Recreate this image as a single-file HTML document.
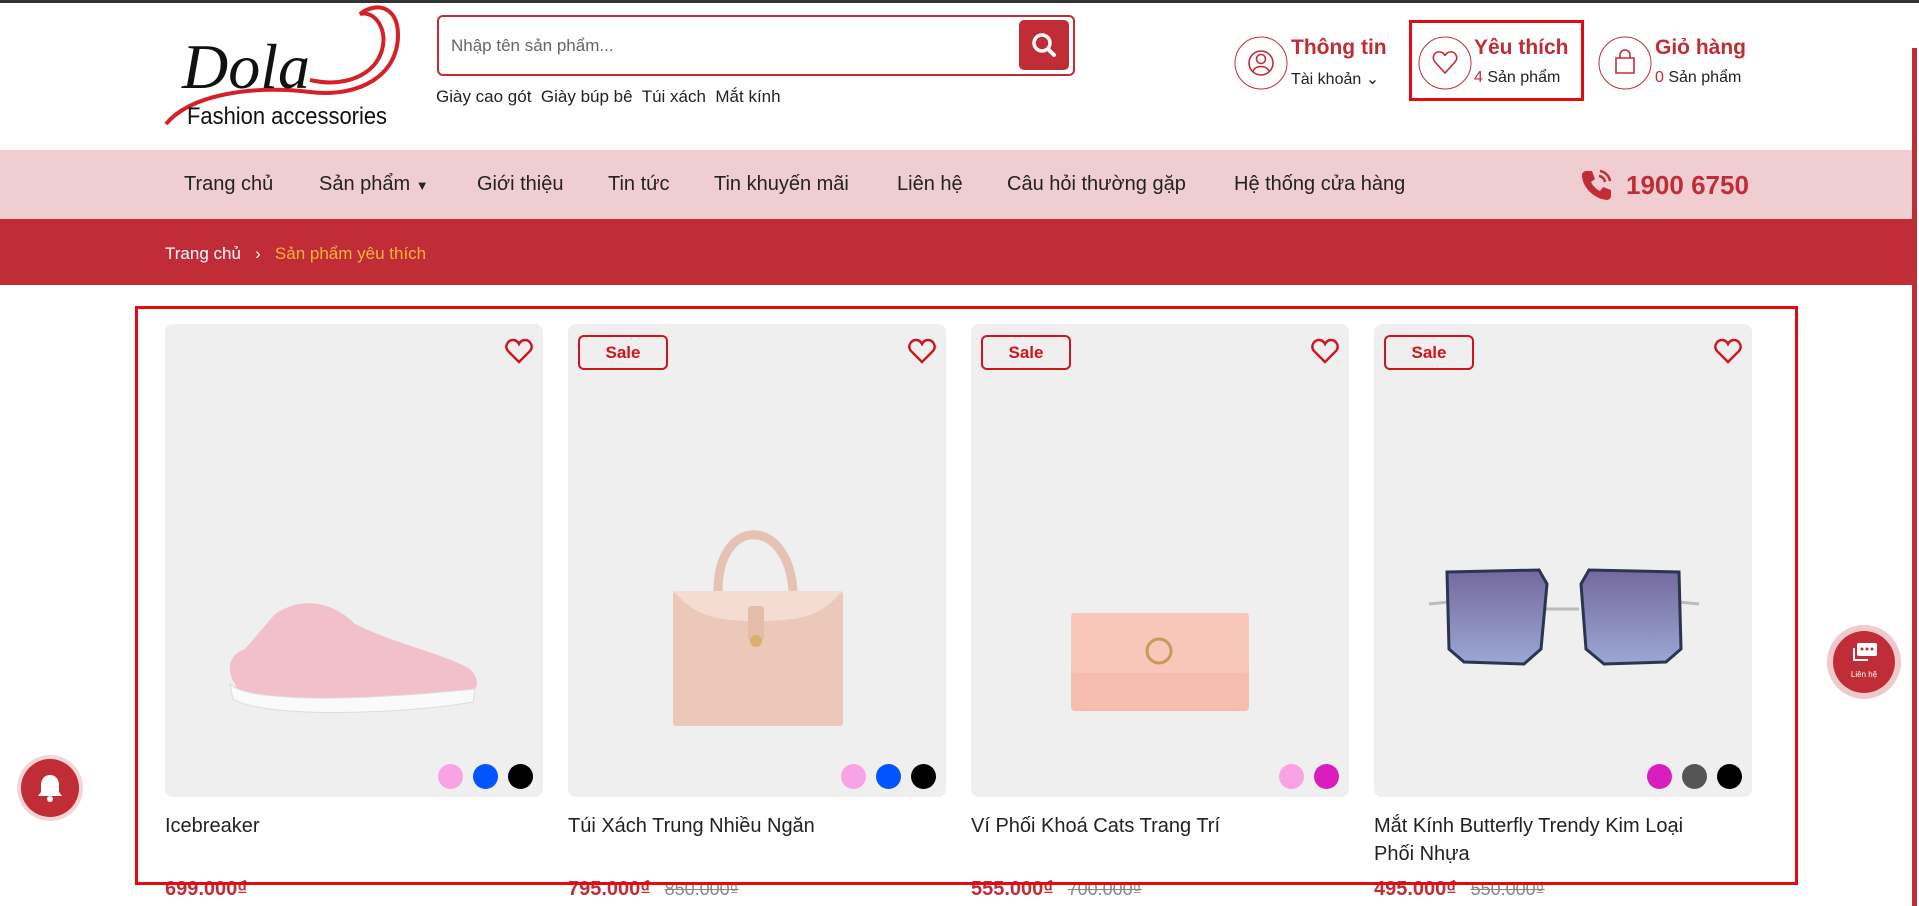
<!DOCTYPE html>
<html><head><meta charset="utf-8"><style>
*{margin:0;padding:0;box-sizing:border-box}
body{width:1919px;height:906px;overflow:hidden;background:#fff;font-family:"Liberation Sans",sans-serif;color:#222;position:relative}
.a{position:absolute}
.nav span{position:absolute;top:173px;font-size:20px;color:#222}
.card{position:absolute;top:324px;width:378px;height:473px;background:#efefef;border-radius:8px}
.sale{position:absolute;left:10px;top:11px;width:90px;height:35px;border:2px solid #d0141c;border-radius:6px;color:#d0141c;font-weight:bold;font-size:17px;text-align:center;line-height:31px}
.heart{position:absolute;right:10px;top:14px}
.dots{position:absolute;right:10px;bottom:8px;display:flex;gap:10px}
.dots i{width:25px;height:25px;border-radius:50%;display:block}
.name{position:absolute;top:812px;font-size:20px;color:#222;line-height:28px}
.price{position:absolute;top:878px;font-size:20px;color:#c12d37;font-weight:bold}
.old{font-weight:normal;color:#888;text-decoration:line-through;font-size:18px;margin-left:14px}
.ht{position:absolute;top:36px;font-size:21px;font-weight:bold;color:#c12d37}
.hs{position:absolute;top:69px;font-size:16px;color:#222}
</style></head><body>
<div class="a" style="left:0;top:0;width:1919px;height:3px;background:#333"></div>
<!-- logo -->
<svg class="a" style="left:160px;top:0" width="245" height="130" viewBox="0 0 245 130">
<path d="M6 124 C30 95,90 85,150 92 C200 98,238 75,238 35 C238 5,215 2,200 14 C215 10,228 30,222 50 C215 75,185 88,150 80" fill="none" stroke="#d42027" stroke-width="4"/>
<text x="22" y="88" font-family="Liberation Serif,serif" font-style="italic" font-size="64" fill="#111">Dola</text>
<text x="27" y="124" font-family="Liberation Sans,sans-serif" font-size="24" fill="#111" textLength="200" lengthAdjust="spacingAndGlyphs">Fashion accessories</text>
</svg>
<!-- search -->
<div class="a" style="left:437px;top:15px;width:638px;height:61px;border:2px solid #c12d37;border-radius:6px"></div>
<div class="a" style="left:451px;top:36px;font-size:17px;color:#666">Nhập tên sản phẩm...</div>
<div class="a" style="left:1019px;top:20px;width:50px;height:50px;background:#c12d37;border-radius:5px"></div>
<svg class="a" style="left:1031px;top:32px" width="26" height="26" viewBox="0 0 26 26"><circle cx="11" cy="11" r="8" fill="none" stroke="#fff" stroke-width="3.5"/><path d="M17 17l6 6" stroke="#fff" stroke-width="4" stroke-linecap="round"/></svg>
<div class="a" style="left:436px;top:87px;font-size:17px;color:#222">Giày cao gót&nbsp; Giày búp bê&nbsp; Túi xách&nbsp; Mắt kính</div>
<!-- header right -->
<svg class="a" style="left:1233px;top:35px" width="56" height="56"><circle cx="28" cy="28" r="26" fill="none" stroke="#c12d37" stroke-width="1"/><circle cx="28" cy="28" r="12" fill="none" stroke="#c12d37" stroke-width="1.6"/><circle cx="28" cy="24" r="4.5" fill="none" stroke="#c12d37" stroke-width="1.6"/><path d="M20 36c3-6 13-6 16 0" fill="none" stroke="#c12d37" stroke-width="1.6"/></svg>
<div class="ht" style="left:1291px">Thông tin</div>
<div class="hs" style="left:1291px">Tài khoản ⌄</div>
<div class="a" style="left:1409px;top:20px;width:175px;height:81px;border:3px solid #e50914"></div>
<svg class="a" style="left:1417px;top:35px" width="56" height="56"><circle cx="28" cy="28" r="26" fill="none" stroke="#c12d37" stroke-width="1"/><path d="M28 38 L18 27 C14 22,18 16,23 17 C26 17,28 20,28 21 C28 20,30 17,33 17 C38 16,42 22,38 27 Z" fill="none" stroke="#c12d37" stroke-width="1.6"/></svg>
<div class="ht" style="left:1474px">Yêu thích</div>
<div class="hs" style="left:1474px"><span style="color:#c12d37">4</span> Sản phẩm</div>
<svg class="a" style="left:1597px;top:35px" width="56" height="56"><circle cx="28" cy="28" r="26" fill="none" stroke="#c12d37" stroke-width="1"/><path d="M19 23h18v15H19z" fill="none" stroke="#c12d37" stroke-width="1.6"/><path d="M23 23v-3a5 5 0 0 1 10 0v3" fill="none" stroke="#c12d37" stroke-width="1.6"/></svg>
<div class="ht" style="left:1655px">Giỏ hàng</div>
<div class="hs" style="left:1655px"><span style="color:#c12d37">0</span> Sản phẩm</div>
<div class="a" style="left:1912px;top:48px;width:5px;height:858px;background:#c12d37"></div>
<!-- nav -->
<div class="a" style="left:0;top:150px;width:1912px;height:69px;background:#f0cdd0"></div>
<div class="nav">
<span style="left:184px">Trang chủ</span>
<span style="left:319px">Sản phẩm <small style="font-size:13px">▼</small></span>
<span style="left:477px">Giới thiệu</span>
<span style="left:608px">Tin tức</span>
<span style="left:714px">Tin khuyến mãi</span>
<span style="left:897px">Liên hệ</span>
<span style="left:1007px">Câu hỏi thường gặp</span>
<span style="left:1234px">Hệ thống cửa hàng</span>
</div>
<svg class="a" style="left:1580px;top:167px" width="34" height="34" viewBox="0 0 34 34"><path d="M6 4l6 0 3 8-4 3c2 4 5 7 9 9l3-4 8 3 0 6c0 2-2 4-4 4C14 32 2 20 2 8c0-2 2-4 4-4z" fill="#c12d37"/><path d="M19 9a7 7 0 0 1 6 6M20 4a12 12 0 0 1 10 10" fill="none" stroke="#c12d37" stroke-width="2.5"/></svg>
<div class="a" style="left:1626px;top:170px;font-size:26px;font-weight:bold;color:#c12d37">1900 6750</div>
<!-- breadcrumb -->
<div class="a" style="left:0;top:219px;width:1912px;height:66px;background:#c12d37"></div>
<div class="a" style="left:165px;top:244px;font-size:17px;color:#fff">Trang chủ &nbsp;&nbsp;›&nbsp;&nbsp; <span style="color:#f4b23a">Sản phẩm yêu thích</span></div>
<!-- products -->
<div class="card" style="left:165px">
<svg class="heart" width="28" height="26" viewBox="0 0 28 26"><path d="M14 24 L3 13 C-1 8,3 2,8 2 C11 2,13 4,14 6 C15 4,17 2,20 2 C25 2,29 8,25 13 Z" fill="none" stroke="#d0141c" stroke-width="2.4"/></svg>
<svg class="a" style="left:40px;top:250px" width="300" height="140" viewBox="0 0 300 140"><path d="M30 110 C20 95,25 80,40 75 L70 40 C100 20,130 30,150 50 C190 70,240 80,265 95 C280 110,270 125,240 125 L60 128 C40 128,32 120,30 110Z" fill="#f1c0cb"/><path d="M25 110 C40 125,120 130,270 115 L268 128 C200 140,60 145,28 125Z" fill="#fafafa" stroke="#ddd"/></svg>
<div class="dots"><i style="background:#f9a3e6"></i><i style="background:#0055ff"></i><i style="background:#000"></i></div>
</div>
<div class="card" style="left:568px">
<div class="sale">Sale</div>
<svg class="heart" width="28" height="26" viewBox="0 0 28 26"><path d="M14 24 L3 13 C-1 8,3 2,8 2 C11 2,13 4,14 6 C15 4,17 2,20 2 C25 2,29 8,25 13 Z" fill="none" stroke="#d0141c" stroke-width="2.4"/></svg>
<svg class="a" style="left:95px;top:182px" width="190" height="225" viewBox="0 0 190 225"><path d="M55 85 C55 10,125 10,130 85" fill="none" stroke="#e6c2b4" stroke-width="9"/><rect x="10" y="85" width="170" height="135" rx="3" fill="#ecc8bb"/><path d="M10 85 h170 c-20 20-30 30-85 30 c-55 0-65-10-85-30z" fill="#f5dcd2"/><rect x="85" y="100" width="16" height="35" rx="3" fill="#e4bca9"/><circle cx="93" cy="135" r="6" fill="#d9b070"/></svg>
<div class="dots"><i style="background:#f9a3e6"></i><i style="background:#0055ff"></i><i style="background:#000"></i></div>
</div>
<div class="card" style="left:971px">
<div class="sale">Sale</div>
<svg class="heart" width="28" height="26" viewBox="0 0 28 26"><path d="M14 24 L3 13 C-1 8,3 2,8 2 C11 2,13 4,14 6 C15 4,17 2,20 2 C25 2,29 8,25 13 Z" fill="none" stroke="#d0141c" stroke-width="2.4"/></svg>
<svg class="a" style="left:98px;top:287px" width="182" height="102" viewBox="0 0 182 102"><rect x="2" y="2" width="178" height="98" rx="4" fill="#f6bcae"/><rect x="2" y="2" width="178" height="60" rx="4" fill="#f8c7ba"/><circle cx="90" cy="40" r="12" fill="none" stroke="#c9985a" stroke-width="3"/></svg>
<div class="dots"><i style="background:#f9a3e6"></i><i style="background:#d81fbd"></i></div>
</div>
<div class="card" style="left:1374px">
<div class="sale">Sale</div>
<svg class="heart" width="28" height="26" viewBox="0 0 28 26"><path d="M14 24 L3 13 C-1 8,3 2,8 2 C11 2,13 4,14 6 C15 4,17 2,20 2 C25 2,29 8,25 13 Z" fill="none" stroke="#d0141c" stroke-width="2.4"/></svg>
<svg class="a" style="left:55px;top:240px" width="270" height="110" viewBox="0 0 270 110"><defs><linearGradient id="g" x1="0" y1="0" x2="0" y2="1"><stop offset="0" stop-color="#75689e"/><stop offset="1" stop-color="#9aa8d4"/></linearGradient></defs><path d="M0 40 L20 38 M250 38 L270 40 M115 45 L150 45" stroke="#bbb" stroke-width="3"/><path d="M18 8 L110 6 L118 20 L112 85 L95 100 L35 98 L20 85 Z" fill="url(#g)" stroke="#2b3550" stroke-width="3"/><path d="M152 20 L160 6 L250 8 L252 85 L237 98 L175 100 L157 85 Z" fill="url(#g)" stroke="#2b3550" stroke-width="3"/></svg>
<div class="dots"><i style="background:#d81fbd"></i><i style="background:#555"></i><i style="background:#000"></i></div>
</div>
<div class="name" style="left:165px">Icebreaker</div>
<div class="name" style="left:568px">Túi Xách Trung Nhiều Ngăn</div>
<div class="name" style="left:971px">Ví Phối Khoá Cats Trang Trí</div>
<div class="name" style="left:1374px">Mắt Kính Butterfly Trendy Kim Loại<br>Phối Nhựa</div>
<div class="price" style="left:165px">699.000₫</div>
<div class="price" style="left:568px">795.000₫<span class="old">850.000₫</span></div>
<div class="price" style="left:971px">555.000₫<span class="old">700.000₫</span></div>
<div class="price" style="left:1374px">495.000₫<span class="old">550.000₫</span></div>
<!-- red outline -->
<div class="a" style="left:135px;top:306px;width:1663px;height:579px;border:3px solid #e50914"></div>
<!-- floating -->
<div class="a" style="left:21px;top:759px;width:58px;height:58px;border-radius:50%;background:#c12d37;box-shadow:0 0 0 4px rgba(193,45,55,.2)"></div>
<svg class="a" style="left:36px;top:773px" width="28" height="30" viewBox="0 0 28 30"><path d="M14 2c-6 0-9 5-9 10v7l-3 4h24l-3-4v-7c0-5-3-10-9-10z" fill="#fff"/><circle cx="14" cy="26" r="3" fill="#fff"/></svg>
<div class="a" style="left:1833px;top:631px;width:62px;height:62px;border-radius:50%;background:#c12d37;box-shadow:0 0 0 6px rgba(193,45,55,.25)"></div>
<svg class="a" style="left:1851px;top:642px" width="28" height="22" viewBox="0 0 28 22"><rect x="6" y="1" width="20" height="13" rx="2" fill="#fff"/><path d="M3 6v12h14" fill="none" stroke="#fff" stroke-width="2"/><circle cx="11" cy="7" r="1.5" fill="#c12d37"/><circle cx="16" cy="7" r="1.5" fill="#c12d37"/><circle cx="21" cy="7" r="1.5" fill="#c12d37"/></svg>
<div class="a" style="left:1833px;top:670px;width:62px;text-align:center;font-size:8px;color:#fff">Liên hệ</div>
</body></html>
